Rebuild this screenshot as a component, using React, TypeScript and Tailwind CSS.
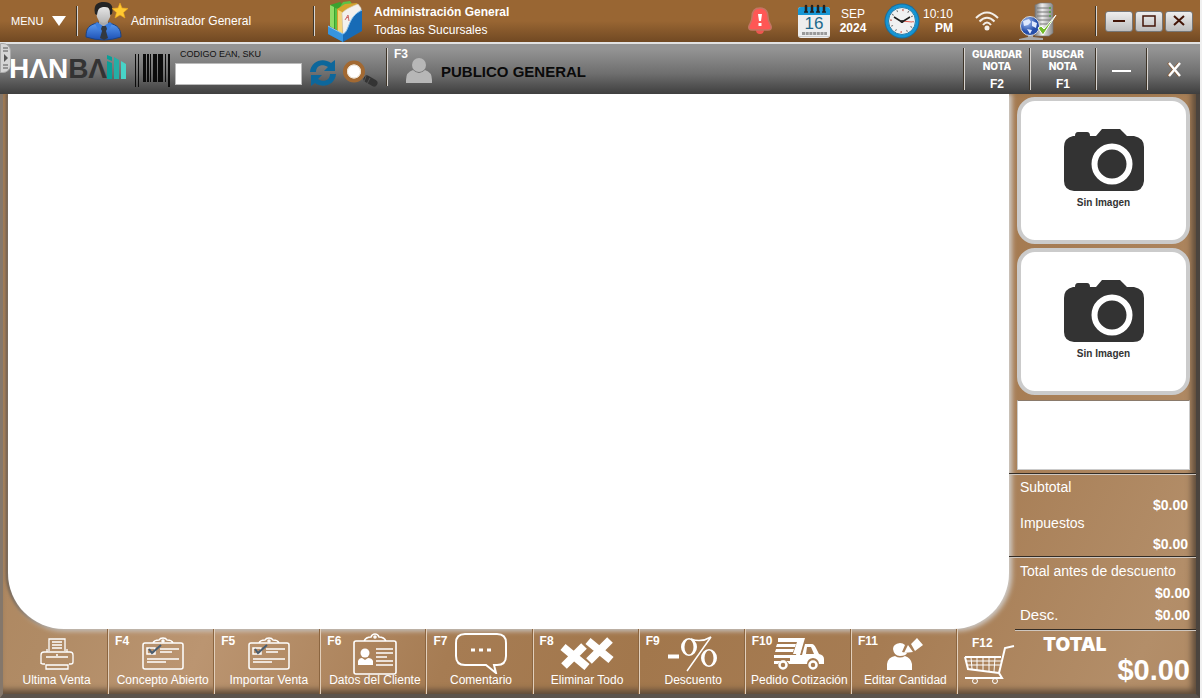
import React from 'react';

const Divider = () => (
  <div className="w-[2px] shrink-0 self-stretch border-l border-r border-l-[#3d3428] border-r-[#d8d4d0]" />
);

const UserIcon = () => (
  <svg width="44" height="40" viewBox="0 0 44 40">
    <defs>
      <linearGradient id="shirt" x1="0" y1="0" x2="0" y2="1">
        <stop offset="0" stopColor="#5c9cf2" />
        <stop offset="1" stopColor="#1c50b4" />
      </linearGradient>
      <linearGradient id="face" x1="0" y1="0" x2="0" y2="1">
        <stop offset="0" stopColor="#ececec" />
        <stop offset="1" stopColor="#b4b4b4" />
      </linearGradient>
    </defs>
    <path d="M1 36C1 27 4 24 12 22L24 22C33 24 36 28 36 36Q19 42 1 36Z" fill="url(#shirt)" stroke="#1b4384" />
    <path d="M14 17h9v6l-4 4-5-4Z" fill="#aaa" />
    <path d="M12 21l6 4-4 5-4-7ZM25 21l-6 4 4 5 4-7Z" fill="#3c7fe0" />
    <path d="M17 25h4l1 3-1 2 2 7-4 2-4-2 2-7-1-2Z" fill="#333940" />
    <ellipse cx="18.500" cy="13" rx="7" ry="9" fill="url(#face)" />
    <path d="M10 13C8 3 13 1 19 1C26 1 29 5 27 13L25 14C25 9 25 6 20 6C14 6 13 8 12 14Z" fill="#242424" />
    <path d="M35 2l2 5 6 .5-4.500 4 1.500 5.500-5-3-5 3 1.500-5.500L27 7.500l6-.5Z" fill="#ffc931" stroke="#eda61c" strokeWidth=".6" />
  </svg>
);

const FolderIcon = () => (
  <svg width="36" height="41" viewBox="0 0 36 41">
    <path d="M3 4l10-3 3 3v24l-13-2Z" fill="#3aa22f" />
    <path d="M3 4l4 2v22l-4-3Z" fill="#90dc67" />
    <path d="M8 7l3 1v22l-3-2ZM16 1l7-1 2 3-12 3Z" fill="#5cc246" />
    <path d="M10 8l8-5 12-1 2 24-18 8-4-4Z" fill="#d4a32e" />
    <path d="M11 9l4 2v22l-4-3Z" fill="#f4d47c" />
    <path d="M15 12C20 7 26 5 31 3l3 4v12L16 36Z" fill="#f3f1ed" stroke="#cfc7b8" strokeWidth=".6" />
    <path d="M18 19l3-5 1 6M19 17l3-1" stroke="#cc6a6a" fill="none" />
    <path d="M1 25l15 8C23 30 20 16 35 9V30L16 41 1 33Z" fill="#176bb6" />
    <path d="M1 25l15 8v8L1 33Z" fill="#3795df" />
    <path d="M1 25l15 8C23 30 20 16 35 9" fill="none" stroke="#8dc7f1" />
  </svg>
);

const BellIcon = () => (
  <svg width="28" height="30" viewBox="0 0 28 30">
    <path d="M10 24h8Q18 28 14 28T10 24Z" fill="#ee5650" />
    <path d="M14 2C20 2 22 6 22 11C22 16 24 17 25 20Q26 24 22 24H6Q2 24 3 20C4 17 6 16 6 11C6 6 8 2 14 2Z" fill="#ff5755" stroke="#c37663" strokeWidth="1.500" />
    <path d="M12 8h4l-1 7h-2ZM12.500 17h3v3h-3Z" fill="#fff" />
  </svg>
);

const CalendarIcon = () => (
  <div className="relative h-[34px] w-8">
    <svg width="32" height="34" viewBox="0 0 32 34">
      <rect x="0" y="3" width="32" height="31" rx="3" fill="#eee" />
      <path d="M0 11V6Q0 3 3 3H29Q32 3 32 6v5Z" fill="#1797d5" />
      <path d="M8 2v5M14 2v5M20 2v5M26 2v5" stroke="#222" strokeWidth="2.500" strokeLinecap="round" />
      <path d="M6 8h4M12 8h4M18 8h4M24 8h4" stroke="#222" strokeWidth="1.500" />
      <path d="M4 29.500h25" stroke="#999" strokeWidth="3" strokeDasharray="3 .7" />
      <path d="M1 32.500h30" stroke="#ccc" />
    </svg>
    <span className="absolute inset-x-0 top-[11px] text-center text-[17px] leading-[18px] text-[#20698c]">16</span>
  </div>
);

const ClockIcon = () => (
  <svg width="36" height="36" viewBox="0 0 36 36">
    <circle cx="18" cy="18" r="17.500" fill="#1d6c99" />
    <circle cx="18" cy="18" r="16.500" fill="#1595d4" />
    <circle cx="18" cy="18" r="13.500" fill="#f0f1f2" stroke="#277ca9" />
    <circle cx="18" cy="18" r="11" fill="none" stroke="#777" strokeWidth="2" strokeDasharray="1 4.760" />
    <circle cx="18" cy="18" r="11" fill="none" stroke="#e08c84" strokeWidth="2" strokeDasharray="1.500 15.780" />
    <path d="M18 18l10 1" stroke="#e45c50" />
    <path d="M10 14l8 5 8-5" fill="none" stroke="#1c1c1c" strokeWidth="1.500" />
    <circle cx="18" cy="18.500" r="1.500" fill="#222" />
  </svg>
);

const WifiIcon = () => (
  <svg width="24" height="20" viewBox="0 0 24 20" fill="none" stroke="#f3eee8" strokeWidth="2">
    <path d="M1 7Q12-4 23 7M4.500 10.500Q12 3 19.500 10.500M8 14Q12 9 16 14" />
    <circle cx="12" cy="17" r="1.500" fill="#f3eee8" />
  </svg>
);

const ServerIcon = () => (
  <svg width="38" height="40" viewBox="0 0 38 40">
    <defs>
      <linearGradient id="tower">
        <stop offset="0" stopColor="#777" />
        <stop offset=".4" stopColor="#eee" />
        <stop offset="1" stopColor="#888" />
      </linearGradient>
      <radialGradient id="globe" cx=".35" cy=".3">
        <stop offset="0" stopColor="#a9c3f3" />
        <stop offset="1" stopColor="#254eaa" />
      </radialGradient>
    </defs>
    <path d="M16 4l5-2h11l2 2v28l-4 3H16Z" fill="url(#tower)" stroke="#777" strokeWidth=".6" />
    <path d="M18 7h14M18 11h14M18 15h14M18 19h14M18 23h14" stroke="#777" />
    <path d="M30 7h2M30 11h2M30 15h2" stroke="#50a73c" strokeWidth="1.500" />
    <path d="M0 38l9-2v-3h5v3l10 1v2H0Z" fill="#a8a8a8" />
    <circle cx="11" cy="25" r="9.500" fill="url(#globe)" stroke="#dadada" strokeWidth="1" />
    <path d="M4 20l6-2 2 3-3 3-4 1ZM13 20l5 2-1 5-4-2ZM8 28l5 1-2 4Z" fill="#dfe9fd" />
    <path d="M19 27l5 7 13-20-12 14-3-3Z" fill="#72bb2a" stroke="#fff" strokeWidth="1" />
  </svg>
);

const Logo = () => (
  <div aria-label="HANBAI" className="flex items-end text-[28px] leading-[21px] font-bold">
    <span className="text-white">HΛN</span>
    <span className="text-[#333]">BΛ</span>
    <svg width="19" height="24" viewBox="0 0 19 24">
      <path d="M0 6l5 2v16H0ZM0 0l5 2v4L0 4Z" fill="#099f98" />
      <path d="M7 2l5 3v19H7Z" fill="#25aea6" />
      <path d="M14 6l5 3v15h-5Z" fill="#47d3c7" />
    </svg>
  </div>
);

const Barcode = () => (
  <svg width="36" height="33" viewBox="0 0 36 33" shapeRendering="crispEdges">
    <path d="M0 0h1v33H0ZM3 0h1v33H3ZM8 0h3v28H8ZM12 0h2v28h-2ZM15 0h1v28h-1ZM18 0h4v28h-4ZM23 0h5v28h-5ZM30 0h1v28h-1ZM33 0h2v33h-2Z" fill="#0b0b0b" />
  </svg>
);

const RefreshIcon = () => (
  <svg width="26" height="26" viewBox="0 0 26 26" fill="#0d679b">
    <path d="M0 12C1 1 13-3 21 3L25 0V11H14L18 7C12 3 6 6 6 12Z" />
    <path d="M26 14C25 25 13 29 5 23L1 26V15H12L8 19C14 23 20 20 20 14Z" />
  </svg>
);

const SearchIcon = () => (
  <svg width="36" height="28" viewBox="0 0 36 28">
    <path d="M21 16l10 5" stroke="#787878" strokeWidth="3" />
    <path d="M25 19l7 4" stroke="#343434" strokeWidth="7" strokeLinecap="round" />
    <path d="M24 16l-2 6M28 18l-3 6" stroke="#555" />
    <circle cx="12" cy="11.500" r="9" fill="#fff" stroke="#a26932" strokeWidth="4" />
    <circle cx="12" cy="11.500" r="6.500" fill="none" stroke="#eadfcf" />
  </svg>
);

const PersonIcon = () => (
  <svg width="26" height="25" viewBox="0 0 26 25" fill="#b7b7b7">
    <circle cx="13" cy="7" r="7" />
    <path d="M0 25V22Q0 14 7 12Q13 18 19 12Q26 14 26 22v3Z" />
  </svg>
);

const CameraIcon = () => (
  <svg width="80" height="62" viewBox="0 0 80 62">
    <path d="M9 7H11Q11 3 14 3H23Q26 3 26 7H32L38 0H56L63 7H70Q80 9 80 18V52Q79 62 69 62H10Q0 61 0 52V18Q0 9 9 7Z" fill="#333" />
    <circle cx="48" cy="35" r="17.500" fill="#333" stroke="#fff" strokeWidth="6" />
  </svg>
);

const PrinterIcon = () => (
  <svg width="34" height="32" viewBox="0 0 34 32" fill="none" stroke="#fff" strokeWidth="1.300">
    <path d="M9 13V1h16v12M1 26V17Q1 14 4 14H30Q33 14 33 17v7Q33 26 31 26H29M5 26H3Q1 26 1 24M7 14v-3M27 14v-3M6 19h22M6 27v4h22v-4ZM12 4h10M12 7h10M12 10h10M16 17h2" />
  </svg>
);

const ClipboardIcon = () => (
  <svg width="42" height="33" viewBox="0 0 42 33" fill="none" stroke="#fff" strokeWidth="1.500">
    <path d="M11 6H3Q1 6 1 8V30Q1 32 3 32H39Q41 32 41 30V8Q41 6 39 6H31M11 6Q12 3 17 3Q18 1 21 1T25 3Q30 3 31 6Z" />
    <circle cx="21" cy="4" r="1" />
    <path d="M5 11h8v6H5ZM18 12h19M18 15h12M5 22h32M5 25h19" />
    <path d="M7 12l3 4L19 8" stroke="#495d70" strokeWidth="2" />
  </svg>
);

const ClientIcon = () => (
  <svg width="44" height="42" viewBox="0 0 44 42" fill="none" stroke="#fff" strokeWidth="1.600">
    <path d="M11 8H3Q1 8 1 10V39Q1 41 3 41H41Q43 41 43 39V10Q43 8 41 8H33M11 8Q13 4 18 4Q19 1 22 1T26 4Q31 4 33 8Z" />
    <circle cx="22" cy="4" r="1" />
    <path d="M23 16h17M23 20h17M23 24h11M23 28h17M23 32h17" />
    <circle cx="12" cy="20" r="4.500" fill="#fff" stroke="none" />
    <path d="M5 32V28Q6 25 9 25L12 27l3-2Q19 25 20 28v4Z" fill="#fff" stroke="none" />
  </svg>
);

const CommentIcon = () => (
  <svg width="52" height="41" viewBox="0 0 52 41" fill="none" stroke="#fff" strokeWidth="2">
    <path d="M10 1H42Q51 1 51 10V23Q51 32 42 32H39L41 40L31 32H10Q1 32 1 23V10Q1 1 10 1Z" />
    <path d="M16 17h4M24 17h4M32 17h4" strokeWidth="3" />
  </svg>
);

const DeleteIcon = () => (
  <svg width="54" height="33" viewBox="0 0 54 33" stroke="#fff" strokeWidth="8">
    <path d="M3 10l24 20M24 9L4 29" />
    <path d="M27 3l24 20M50 3L28 24" stroke="#a47a50" strokeWidth="11" />
    <path d="M28 4l23 19M50 3L29 24" />
  </svg>
);

const DiscountIcon = () => (
  <svg width="50" height="36" viewBox="0 0 50 36" fill="#fff">
    <path d="M0 18.500h11v4H0Z" />
    <path d="M21 2A8 9 0 1 0 21 20A8 9 0 1 0 21 2ZM21 3.500A4.500 7.500 0 1 1 21 18.500A4.500 7.500 0 1 1 21 3.500Z" fillRule="evenodd" />
    <path d="M41 13A8 9 0 1 0 41 31A8 9 0 1 0 41 13ZM41 14.500A4.500 7.500 0 1 1 41 29.500A4.500 7.500 0 1 1 41 14.500Z" fillRule="evenodd" />
    <path d="M23 3Q33 7 43 1L19 35" fill="none" stroke="#fff" strokeWidth="1.500" />
  </svg>
);

const TruckIcon = () => (
  <svg width="50" height="32" viewBox="0 0 50 32" fill="#fff">
    <path d="M4 0H31L26 17H22L25 4H4ZM3 6H22L21 9H2ZM2 11H20L19 14H1ZM0 17H28L31 6H38Q40 6 42 10L45 16Q50 17 50 21V26H45A6 6 0 0 0 33 26H15A6 6 0 0 0 4 26H0V23H16V20H0ZM33 9L32 16H40L37 9Z" fillRule="evenodd" />
    <path d="M23 4H29L26 16H19Z" />
    <circle cx="9" cy="27" r="3.500" fill="none" stroke="#fff" strokeWidth="2.500" />
    <circle cx="39" cy="27" r="3.500" fill="none" stroke="#fff" strokeWidth="2.500" />
  </svg>
);

const EditIcon = () => (
  <svg width="36" height="32" viewBox="0 0 36 32" fill="#fff">
    <path d="M0 32V26Q1 19 8 18Q13 21 18 18Q24 20 25 26v6Z" />
    <path d="M13 5Q6 6 6 11Q7 18 13 18Q19 18 20 15L15 14L18 7Q16 5 13 5Z" />
    <path d="M24 6l6-6 6 7-8 6ZM21 7l5 7-9 1Z" />
  </svg>
);

const CartIcon = () => (
  <svg width="51" height="39" viewBox="0 0 51 39" fill="none" stroke="#fff">
    <path d="M50 1L41 3L35 28L38 33H1M1 12H37M1 12L4 24L35 28" strokeWidth="2" />
    <path d="M7 12l1 12M13 12v13M19 12v13M25 12v14M31 12l-1 15M2 16h35M3 20h33" />
    <circle cx="11" cy="36" r="2.500" />
    <circle cx="31" cy="36" r="2.500" />
  </svg>
);

const actions = [
  { key: '', label: 'Ultima Venta', Icon: PrinterIcon },
  { key: 'F4', label: 'Concepto Abierto', Icon: ClipboardIcon },
  { key: 'F5', label: 'Importar Venta', Icon: ClipboardIcon },
  { key: 'F6', label: 'Datos del Cliente', Icon: ClientIcon },
  { key: 'F7', label: 'Comentario', Icon: CommentIcon },
  { key: 'F8', label: 'Eliminar Todo', Icon: DeleteIcon },
  { key: 'F9', label: 'Descuento', Icon: DiscountIcon },
  { key: 'F10', label: 'Pedido Cotización', Icon: TruckIcon },
  { key: 'F11', label: 'Editar Cantidad', Icon: EditIcon },
];

function TopBar() {
  const windowButton =
    'flex h-[21px] w-7 items-center justify-center rounded-[3px] border border-[#777] bg-linear-to-b from-[#eee] to-[#bdbdbd] text-[#431507]';
  return (
    <header className="flex h-[42px] shrink-0 items-center bg-linear-to-b from-[#996633] from-50% to-[#714923] pr-[7px] text-[12px] leading-[14px] text-white">
      <button className="flex w-[76px] items-center gap-[9px] pl-[11px] text-[11px]">
        MENU
        <svg width="14" height="10" viewBox="0 0 14 10">
          <path d="M0 0h14L7 10Z" fill="#fff" />
        </svg>
      </button>
      <div className="flex h-[30px]"><Divider /></div>
      <div className="flex w-[235px] items-center gap-[2px] pl-[7px]">
        <UserIcon />
        <span>Administrador General</span>
      </div>
      <div className="flex h-[30px]"><Divider /></div>
      <div className="flex items-center gap-[11px] pl-3">
        <FolderIcon />
        <div className="leading-[18px]">
          <div className="font-bold">Administración General</div>
          <div>Todas las Sucursales</div>
        </div>
      </div>
      <div className="ml-auto flex items-center">
        <BellIcon />
        <div className="ml-6"><CalendarIcon /></div>
        <div className="ml-[9px] w-7 text-center">
          <div>SEP</div>
          <div className="font-bold">2024</div>
        </div>
        <div className="ml-[17px]"><ClockIcon /></div>
        <div className="ml-[2px] w-[31px] text-right">
          <div>10:10</div>
          <div className="font-bold">PM</div>
        </div>
        <div className="ml-[22px]"><WifiIcon /></div>
        <div className="ml-5"><ServerIcon /></div>
        <div className="ml-[38px] flex h-[30px]"><Divider /></div>
        <div className="ml-2 flex gap-[2px]">
          <button aria-label="Minimizar" className={windowButton}>
            <svg width="14" height="12"><path d="M1 6h12" stroke="currentColor" strokeWidth="2" /></svg>
          </button>
          <button aria-label="Maximizar" className={windowButton}>
            <svg width="14" height="12"><path d="M1 1h12v10H1Z" fill="none" stroke="currentColor" strokeWidth="1.500" /></svg>
          </button>
          <button aria-label="Cerrar" className={windowButton}>
            <svg width="14" height="12"><path d="M2 1l10 9M12 1L2 10" stroke="currentColor" strokeWidth="2" /></svg>
          </button>
        </div>
      </div>
    </header>
  );
}

function ToolBar() {
  const noteButton =
    'flex w-16 flex-col items-center font-[Inter] text-[10px] leading-[12px] font-extrabold text-white';
  return (
    <div className="relative flex h-[52px] shrink-0 items-stretch border-t-2 border-[#e2e2e2] bg-linear-to-b from-[#949494] from-10% via-[#6e6e6e] via-60% to-[#3f3f3f]">
      <button
        aria-label="Mostrar panel"
        className="absolute -top-px left-0 z-10 flex h-[30px] w-[11px] items-center justify-center rounded-r-lg border border-[#aaa] bg-[#d5d5d5]"
      >
        <svg width="8" height="22" viewBox="0 0 8 22">
          <path d="M1 1h5M1 4h5M1 18h5M1 21h5" stroke="#555" />
          <path d="M2 7l4 4-4 4Z" fill="#555" />
        </svg>
      </button>
      <div className="flex w-[127px] items-start pt-[11px] pl-[9px]"><Logo /></div>
      <div className="pt-[10px] pl-2"><Barcode /></div>
      <div className="ml-1 flex w-[127px] flex-col pt-[5px]">
        <label htmlFor="sku" className="pl-[5px] text-[9px] leading-[11px] text-[#111]">CODIGO EAN, SKU</label>
        <input id="sku" className="mt-[3px] h-[22px] w-full border border-[#bbb] bg-white px-1 text-[12px] outline-none" />
      </div>
      <button aria-label="Actualizar" className="ml-2 self-start pt-4"><RefreshIcon /></button>
      <button aria-label="Buscar" className="ml-[6px] self-start pt-4"><SearchIcon /></button>
      <div className="mt-1 mb-2 ml-2 flex"><Divider /></div>
      <button className="flex pl-[6px] text-left">
        <span className="pt-[3px] text-[12px] leading-[14px] font-bold text-white">F3</span>
        <span className="-ml-[2px] pt-[14px]"><PersonIcon /></span>
        <span className="pt-[19px] pl-[9px] text-[15px] leading-[18px] font-bold text-[#0a0a0a]">PUBLICO GENERAL</span>
      </button>
      <div className="ml-auto flex pt-1 pb-1">
        <Divider />
        <button className={noteButton}>
          <span>GUARDAR</span>
          <span>NOTA</span>
          <span className="mt-[6px] font-['Liberation_Sans'] text-[12px] font-bold">F2</span>
        </button>
        <Divider />
        <button className={noteButton}>
          <span>BUSCAR</span>
          <span>NOTA</span>
          <span className="mt-[6px] font-['Liberation_Sans'] text-[12px] font-bold">F1</span>
        </button>
        <Divider />
        <button aria-label="Ocultar" className="flex w-[49px] items-center justify-center pt-1">
          <svg width="19" height="4"><path d="M0 2h19" stroke="#fff" strokeWidth="2" /></svg>
        </button>
        <Divider />
        <button aria-label="Cerrar nota" className="flex w-[52px] items-center justify-center">
          <svg width="15" height="15" viewBox="0 0 15 15">
            <path d="M1 1l11 13M12 1L1 14" stroke="#8a5427" strokeWidth="2" />
            <path d="M2 1l11 13M13 1L2 14" stroke="#fff" strokeWidth="2.500" />
          </svg>
        </button>
      </div>
    </div>
  );
}

const ImageCard = () => (
  <div className="flex h-[147px] flex-col items-center rounded-[18px] border-4 border-[#cbcbcb] bg-white pt-7">
    <CameraIcon />
    <span className="mt-[6px] text-[10px] leading-[12px] font-bold text-[#333]">Sin Imagen</span>
  </div>
);

function SidePanel() {
  return (
    <aside className="w-[187px] shrink-0 text-[14px] leading-[16px] text-white">
      <div className="flex h-[379px] flex-col gap-1 px-[6px] pt-[3px] pl-2">
        <ImageCard />
        <ImageCard />
        <div className="mt-[1px] h-[70px] border border-[#cbcbcb] border-t-[#8a7a6b] bg-white" />
      </div>
      <section className="h-[83px] border-t border-[#332c25] pr-2 pl-[11px] shadow-[inset_0_1px_#cfc7bf]">
        <div className="pt-[5px]">Subtotal</div>
        <div className="pt-[2px] text-right font-bold">$0.00</div>
        <div className="pt-[2px]">Impuestos</div>
        <div className="pt-[5px] text-right font-bold">$0.00</div>
      </section>
      <section className="h-[72px] border-t border-[#332c25] pr-[6px] pl-[11px] shadow-[inset_0_1px_#cfc7bf]">
        <div className="pt-[6px]">Total antes de descuento</div>
        <div className="pt-[6px] text-right font-bold">$0.00</div>
        <div className="flex justify-between pt-[6px]">
          <span className="text-[15px]">Desc.</span>
          <span className="font-bold">$0.00</span>
        </div>
      </section>
    </aside>
  );
}

function ActionBar() {
  return (
    <footer className="flex h-[65px] shrink-0 text-white">
      {actions.map(({ key, label, Icon }) => (
        <button
          key={label}
          className="relative flex min-w-0 flex-1 flex-col items-center border-r border-[#e2cfbb] pl-[2px] shadow-[inset_-1px_0_#8b6540]"
        >
          <span className="absolute top-[5px] left-[6px] text-[12px] leading-[14px] font-bold">{key}</span>
          <span className="flex h-[43px] items-center justify-center pt-[6px]"><Icon /></span>
          <span className="text-[12px] leading-[16px] whitespace-nowrap">{label}</span>
        </button>
      ))}
      <div className="flex w-[238px] shrink-0 pl-[6px]">
        <button className="flex w-[51px] flex-col items-start pt-[7px]">
          <span className="pl-2 text-[12px] leading-[14px] font-bold">F12</span>
          <span className="-mt-[5px]"><CartIcon /></span>
        </button>
        <div className="flex flex-1 flex-col border-t border-[#332c25] pr-[6px] shadow-[inset_0_1px_#cfc7bf]">
          <span className="pt-[5px] pl-7 font-[Inter] text-[19px] leading-[20px] font-black">TOTAL</span>
          <span className="text-right text-[29px] leading-[30px] font-bold">$0.00</span>
        </div>
      </div>
    </footer>
  );
}

export default function App() {
  return (
    <div className="flex min-h-screen flex-col border-r-2 border-[#f0f0f0] bg-[#996633] font-['Liberation_Sans',Arial,sans-serif]">
      <TopBar />
      <ToolBar />
      <main className="flex flex-1 flex-col border-r-4 border-b-4 border-l-[3px] border-r-[#4b443e] border-b-[#5b534c] border-l-[#84776b] bg-linear-[115deg,#a97f56_0%,#b08b65_20%,#bb9571_31%,#a67c53_48%,#a2774c_61%,#a67c53_77%,#b38e69_95%,#b08a64_100%] shadow-[inset_-4px_-4px_6px_#5c4a39]">
        <div className="flex flex-1">
          <div className="ml-[5px] flex-1 rounded-b-[56px] bg-white shadow-[2px_1px_5px_1px_#d0cdca,-2px_0_3px_#4d3d2e]" />
          <SidePanel />
        </div>
        <ActionBar />
      </main>
    </div>
  );
}
